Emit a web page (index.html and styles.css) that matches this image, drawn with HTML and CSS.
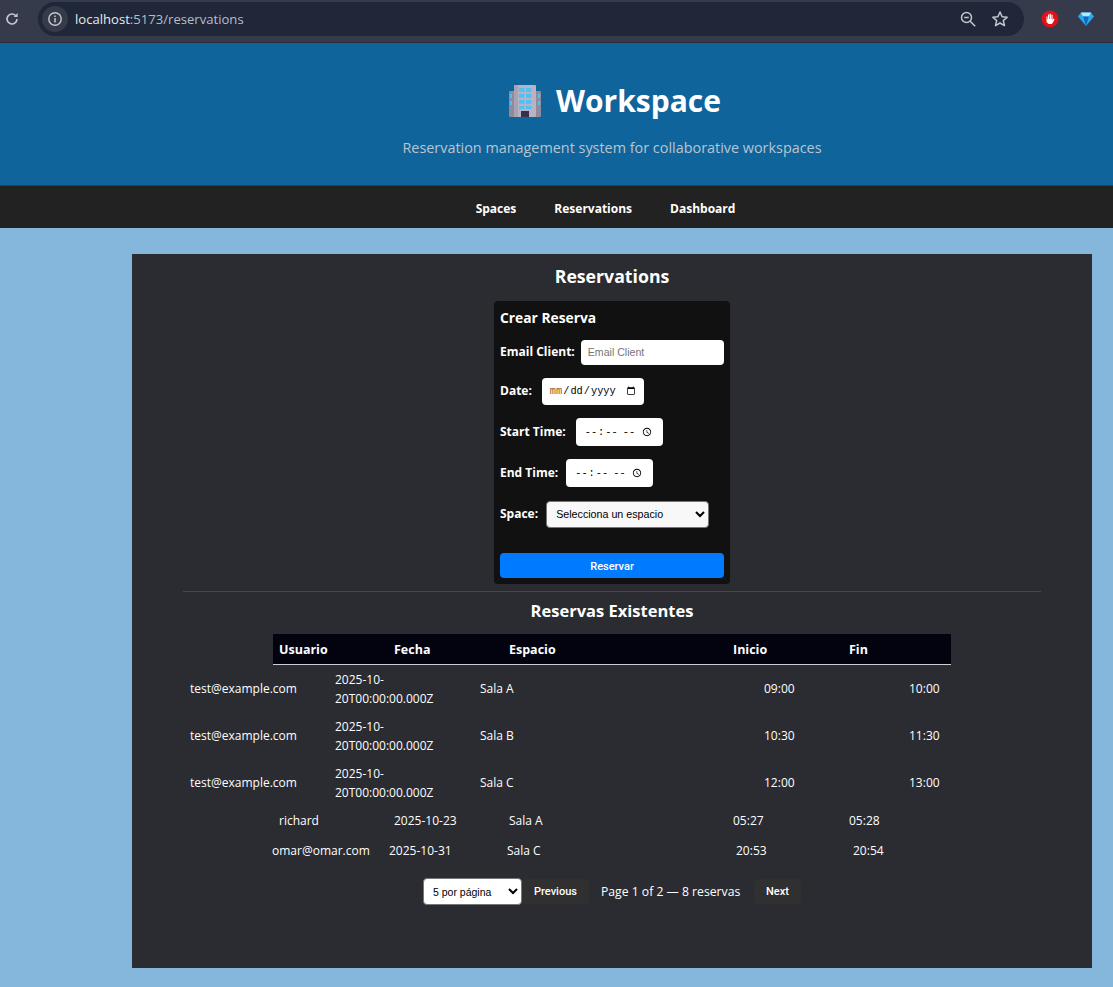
FILE: index.html
```html
<!DOCTYPE html>
<html lang="en">
<head>
    <meta charset="UTF-8">
    <meta name="viewport" content="width=device-width, initial-scale=1.0">
    <title>Workspace</title>
    <link rel="stylesheet" href="styles.css">
</head>
<body>

<div class="browser-bar">
    <svg class="reload" width="16" height="16" viewBox="0 0 16 16"><path d="M13 8a5 5 0 1 1-1.5-3.6" fill="none" stroke="#c4c7cd" stroke-width="1.6"/><path d="M13.6 2v4h-4z" fill="#c4c7cd"/></svg>
    <div class="omnibox">
        <span class="site-info">
            <svg width="16" height="16" viewBox="0 0 16 16"><circle cx="8" cy="8" r="6.2" fill="none" stroke="#c4c7cd" stroke-width="1.4"/><path d="M8 7v4.4M8 4.4v1.5" stroke="#c4c7cd" stroke-width="1.5"/></svg>
        </span>
        <span class="url">localhost<span class="url-path">:5173/reservations</span></span>
        <svg class="omni-icon" width="18" height="18" viewBox="0 0 18 18"><circle cx="7.5" cy="7.5" r="5" fill="none" stroke="#c4c7cd" stroke-width="1.5"/><path d="M11.2 11.2l5 5M5.2 7.5h4.6" stroke="#c4c7cd" stroke-width="1.5"/></svg>
        <svg class="omni-icon" width="18" height="18" viewBox="0 0 18 18"><path d="M9 2l2.1 4.7 5.1.5-3.9 3.4 1.2 5L9 13l-4.5 2.6 1.2-5-3.9-3.4 5.1-.5z" fill="none" stroke="#c4c7cd" stroke-width="1.5" stroke-linejoin="round"/></svg>
    </div>
    <svg class="ext-stop" width="18" height="18" viewBox="0 0 18 18"><circle cx="9" cy="9" r="8.4" fill="#e3101a"/><path d="M5.5 9V6.5h1V9h.5V4.5h1.2V9h.5V3.8h1.2V9h.5V4.8h1.2V10l1-1.6 1 .5-1.6 3.6-1.3 1.5H7.5L5.5 12z" fill="#fff"/></svg>
    <svg class="ext-gem" width="18" height="18" viewBox="0 0 18 18"><path d="M4 2.5h10l3 4-8 9.5-8-9.5z" fill="#2aa7ee"/><path d="M4 2.5h10l-2 4H6z" fill="#b5e8fc"/><path d="M6 6.5h6L9 16z" fill="#0f6cbd"/></svg>
</div>

<header class="site-header">
    <h1 class="site-title">
        <svg class="building" width="36" height="36" viewBox="0 0 36 36">
            <rect x="2" y="8" width="7" height="26" rx="1" fill="#8f8a9c"/>
            <rect x="27" y="8" width="7" height="26" rx="1" fill="#8f8a9c"/>
            <rect x="7" y="2" width="22" height="32" rx="1" fill="#b9b3c4"/>
            <rect x="7" y="2" width="4" height="32" fill="#a8a2b4"/>
            <g fill="#4fc1f5">
                <rect x="12" y="5" width="5.5" height="3.8"/><rect x="19" y="5" width="5.5" height="3.8"/>
                <rect x="12" y="11" width="5.5" height="3.8"/><rect x="19" y="11" width="5.5" height="3.8"/>
                <rect x="12" y="17" width="5.5" height="3.8"/><rect x="19" y="17" width="5.5" height="3.8"/>
                <rect x="12" y="23" width="5.5" height="3"/><rect x="19" y="23" width="5.5" height="3"/>
                <rect x="3" y="11" width="2" height="4"/><rect x="3" y="18" width="2" height="4"/>
                <rect x="31" y="11" width="2" height="4"/><rect x="31" y="18" width="2" height="4"/>
            </g>
            <rect x="14" y="28" width="8" height="6" fill="#37304a"/>
        </svg>
        Workspace
    </h1>
    <p class="site-subtitle">Reservation management system for collaborative workspaces</p>
</header>

<nav class="site-nav">
    <a href="#">Spaces</a>
    <a href="#">Reservations</a>
    <a href="#">Dashboard</a>
</nav>

<main class="panel">
    <h2 class="panel-title">Reservations</h2>

    <form class="res-form">
        <h3>Crear Reserva</h3>
        <div class="field field-email">
            <label for="email">Email Client:</label>
            <input type="text" id="email" placeholder="Email Client">
        </div>
        <div class="field field-date">
            <label for="date">Date:</label>
            <input type="date" id="date">
        </div>
        <div class="field field-time">
            <label for="start">Start Time:</label>
            <input type="time" id="start">
        </div>
        <div class="field field-time field-end">
            <label for="end">End Time:</label>
            <input type="time" id="end">
        </div>
        <div class="field field-space">
            <label for="space">Space:</label>
            <select id="space"><option>Selecciona un espacio</option></select>
        </div>
        <button type="button" class="submit-btn">Reservar</button>
    </form>

    <hr class="divider">

    <h2 class="list-title">Reservas Existentes</h2>

    <div class="res-table">
        <div class="res-row res-head">
            <span>Usuario</span><span>Fecha</span><span>Espacio</span><span>Inicio</span><span>Fin</span>
        </div>
        <div class="res-row res-wide">
            <span>test@example.com</span><span>2025-10-20T00:00:00.000Z</span><span>Sala A</span><span>09:00</span><span>10:00</span>
        </div>
        <div class="res-row res-wide">
            <span>test@example.com</span><span>2025-10-20T00:00:00.000Z</span><span>Sala B</span><span>10:30</span><span>11:30</span>
        </div>
        <div class="res-row res-wide">
            <span>test@example.com</span><span>2025-10-20T00:00:00.000Z</span><span>Sala C</span><span>12:00</span><span>13:00</span>
        </div>
        <div class="res-row res-short">
            <span>richard</span><span>2025-10-23</span><span>Sala A</span><span>05:27</span><span>05:28</span>
        </div>
        <div class="res-row res-last">
            <span>omar@omar.com</span><span>2025-10-31</span><span>Sala C</span><span>20:53</span><span>20:54</span>
        </div>
    </div>

    <div class="pager">
        <select class="page-size"><option>5 por página</option></select>
        <button type="button" class="pager-btn btn-prev">Previous</button>
        <span class="page-info">Page 1 of 2 — 8 reservas</span>
        <button type="button" class="pager-btn btn-next">Next</button>
    </div>
</main>

</body>
</html>
```

FILE: styles.css
```css
body {
    font-family: "Open Sans", "Noto Sans", sans-serif;
    margin: 0;
    padding: 0;
    background-color: #85b7dd;
    color: #fff;
}
.browser-bar {
    height: 43px;
    background-color: #353b4b;
    border-bottom: 1px solid #2c3140;
    box-sizing: border-box;
    display: flex;
    align-items: center;
    padding: 0 0 5px 4px;
}
.reload {
    margin-right: 18px;
}
.omnibox {
    width: 986px;
    height: 34px;
    background-color: #1f2738;
    border-radius: 17px;
    display: flex;
    align-items: center;
    padding: 0 15px 0 4px;
    box-sizing: border-box;
}
.site-info {
    width: 26px;
    height: 26px;
    border-radius: 50%;
    background-color: #353b4b;
    display: flex;
    align-items: center;
    justify-content: center;
    margin-right: 7px;
}
.url {
    flex: 1;
    font-size: 13.1px;
    color: #e8eaed;
}
.url-path {
    color: #b9bdc6;
}
.omni-icon {
    margin-left: 14px;
}
.ext-stop {
    margin-left: 17px;
}
.ext-gem {
    margin-left: 18px;
}
.site-header {
    height: 142px;
    padding-left: 111px;
    background-color: #0f649c;
    border-bottom: 1px solid #34404e;
    text-align: center;
}
.site-title {
    margin: 0;
    padding: 37px 0 0 4px;
    font-size: 30px;
    line-height: 42px;
    font-weight: 700;
    display: flex;
    justify-content: center;
    align-items: center;
    gap: 13px;
}
.site-subtitle {
    margin: 15px 0 0;
    font-size: 14.4px;
    line-height: 22px;
    color: #b9c5d0;
}
.site-nav {
    height: 42px;
    padding: 2px 0 0 98px;
    box-sizing: border-box;
    background-color: #222;
    display: flex;
    justify-content: center;
    align-items: center;
    gap: 38px;
}
.site-nav a {
    color: #fff;
    text-decoration: none;
    font-weight: 700;
    font-size: 12px;
}
.panel {
    width: 960px;
    height: 714px;
    margin: 26px 0 19px 132px;
    padding: 9px 51px 0;
    box-sizing: border-box;
    background-color: #2b2c31;
    display: flex;
    flex-direction: column;
    align-items: center;
}
.panel-title {
    margin: 0 0 1px;
    font-size: 17.7px;
    line-height: 26px;
    font-weight: 700;
}
.res-form {
    width: 236px;
    height: 283px;
    margin-top: 11px;
    padding: 6px;
    box-sizing: border-box;
    background-color: #111;
    border-radius: 4px;
}
.res-form h3 {
    margin: 0;
    font-size: 13.8px;
    line-height: 21px;
    font-weight: 700;
}
.field {
    display: flex;
    align-items: center;
    font-size: 12px;
    font-weight: 700;
}
.field label {
    white-space: nowrap;
    margin-bottom: 2px;
}
.field input, .field select {
    border: none;
    border-radius: 4px;
    background-color: #fff;
    color: #000;
    box-sizing: border-box;
    outline: none;
    font-family: "Liberation Sans", sans-serif;
}
.field-email {
    margin-top: 12px;
    gap: 6px;
}
.field-email input {
    width: 143px;
    height: 25px;
    padding: 0 7px 2px;
    font-size: 10.6px;
}
.field-email input::placeholder {
    color: #757575;
}
.field-date {
    margin-top: 13px;
    gap: 10px;
}
.field-date input, .field-time input {
    font-family: "Liberation Mono", monospace;
    font-size: 10.3px;
}
.field-date input {
    width: 102px;
    height: 27px;
    padding: 0 6px 0 7px;
}
.field-date input::-webkit-datetime-edit-month-field {
    color: #8a5a20;
}
.field-time {
    margin-top: 13px;
    gap: 10px;
}
.field-time input {
    width: 87px;
    height: 28px;
    padding: 0 7px 0 8px;
}
.field-time input::-webkit-calendar-picker-indicator {
    margin-left: 0;
}
.field-end {
    gap: 8px;
}
.field-space {
    margin-top: 14px;
    gap: 8px;
}
.field-space select {
    width: 163px;
    height: 27px;
    padding: 0 5px 1px;
    font-size: 10.7px;
    background-color: #f8f8f8;
    border: 1px solid #767676;
}
.submit-btn {
    display: block;
    width: 224px;
    height: 25px;
    margin-top: 25px;
    padding-top: 2px;
    border: none;
    border-radius: 4px;
    background-color: #007bff;
    color: #fff;
    font-family: Roboto, sans-serif;
    font-size: 11px;
    font-weight: 500;
}
.divider {
    width: 858px;
    margin: 7px 0 0;
    border: none;
    border-top: 1px solid #46474b;
}
.list-title {
    margin: 6px 0 0;
    font-size: 16.5px;
    line-height: 26px;
    font-weight: 700;
}
.res-table {
    width: 858px;
    margin-top: 10px;
    font-size: 12px;
}
.res-row {
    display: grid;
    align-items: center;
    line-height: 18.5px;
}
.res-head {
    grid-template-columns: 115px 115px 224px 116px 1fr;
    width: 678px;
    height: 31px;
    margin-left: 90px;
    padding: 2px 0 0 6px;
    box-sizing: border-box;
    background-color: #03030f;
    border-bottom: 1px solid #cfcfcf;
    font-weight: 700;
    font-size: 12.5px;
}
.res-wide {
    grid-template-columns: 145px 145px 284px 145px 1fr;
    height: 47px;
    padding: 2px 0 0 7px;
    box-sizing: border-box;
}
.res-wide span:nth-child(2) {
    width: 110px;
}
.res-short {
    grid-template-columns: 115px 115px 224px 116px 1fr;
    height: 30px;
    margin-left: 96px;
}
.res-last {
    grid-template-columns: 117px 118px 229px 117px 1fr;
    height: 30px;
    margin-left: 89px;
}
.pager {
    display: flex;
    align-items: center;
    margin-top: 12px;
    font-size: 12.2px;
}
.page-size {
    width: 99px;
    height: 27px;
    padding: 0 5px;
    border: 1px solid #767676;
    border-radius: 4px;
    background-color: #fff;
    font-family: "Liberation Sans", sans-serif;
    font-size: 10.5px;
}
.pager-btn {
    height: 25px;
    padding: 0;
    border: none;
    border-radius: 4px;
    background-color: #303030;
    color: #fff;
    font-family: Roboto, sans-serif;
    font-size: 11px;
    font-weight: 500;
}
.btn-prev {
    width: 67px;
}
.btn-next {
    width: 47px;
}
.page-info {
    width: 140px;
    margin: 0 13px 0 12px;
    white-space: nowrap;
}
```
